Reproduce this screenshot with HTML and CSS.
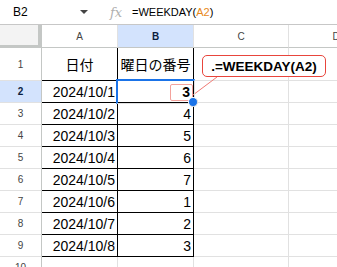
FILE: index.html
```html
<!DOCTYPE html>
<html lang="ja">
<head>
  <meta charset="UTF-8">
  <title>WEEKDAY</title>
  <link rel="stylesheet" href="styles.css">
</head>
<body>

  <div class="fbar">
    <div class="namebox">B2</div>
    <span class="caret"></span>
    <span class="fx">fx</span>
    <div class="formula">=WEEKDAY(<span class="ref">A2</span>)</div>
  </div>

  <div class="sheet">
    <div class="corner"></div>
    <div class="ch">A</div>
    <div class="ch hl">B</div>
    <div class="ch">C</div>
    <div class="ch">D</div>

    <div class="rh">1</div>
    <div class="dt title">日付</div>
    <div class="dt title">曜日の番号</div>
    <div></div>
    <div></div>

    <div class="rh hl">2</div>
    <div class="dt num">2024/10/1</div>
    <div class="dt num bold">3</div>
    <div></div>
    <div></div>

    <div class="rh">3</div>
    <div class="dt num">2024/10/2</div>
    <div class="dt num">4</div>
    <div></div>
    <div></div>

    <div class="rh">4</div>
    <div class="dt num">2024/10/3</div>
    <div class="dt num">5</div>
    <div></div>
    <div></div>

    <div class="rh">5</div>
    <div class="dt num">2024/10/4</div>
    <div class="dt num">6</div>
    <div></div>
    <div></div>

    <div class="rh">6</div>
    <div class="dt num">2024/10/5</div>
    <div class="dt num">7</div>
    <div></div>
    <div></div>

    <div class="rh">7</div>
    <div class="dt num">2024/10/6</div>
    <div class="dt num">1</div>
    <div></div>
    <div></div>

    <div class="rh">8</div>
    <div class="dt num">2024/10/7</div>
    <div class="dt num">2</div>
    <div></div>
    <div></div>

    <div class="rh">9</div>
    <div class="dt num">2024/10/8</div>
    <div class="dt num">3</div>
    <div></div>
    <div></div>

    <div class="rh">10</div>
    <div></div>
    <div></div>
    <div></div>
    <div></div>

    <!-- overlays -->
    <div class="mark"></div>
    <svg class="leader" width="30" height="25" viewBox="0 0 30 25">
      <line x1="3" y1="20" x2="27" y2="2" stroke="#f07a74" stroke-width="1"/>
    </svg>
    <div class="callout">.=WEEKDAY(A2)</div>
    <div class="selection"></div>
    <div class="handle"></div>
  </div>

</body>
</html>
```

FILE: styles.css
```css
body { margin: 0; width: 337px; height: 267px; overflow: hidden; background: #fff; font-family: "Liberation Sans", Arial, "Noto Sans CJK JP", sans-serif; color: #000; }

.fbar { display: flex; align-items: center; height: 25px; box-sizing: border-box; border-bottom: 1px solid #c7c7c7; }
.namebox { width: 80px; box-sizing: border-box; padding-left: 13px; font-size: 12px; }
.caret { width: 0; height: 0; border-left: 4px solid transparent; border-right: 4px solid transparent; border-top: 4px solid #444; }
.fx { margin-left: 22px; width: 14px; font-family: "DejaVu Serif", serif; font-style: italic; font-size: 13px; color: #b0b0b0; }
.formula { margin-left: 8px; font-size: 11px; }
.ref { color: #e8891a; }

.sheet { position: relative; display: grid; grid-template-columns: 42px 76px 76px 95px 95px; grid-template-rows: 23px 33px repeat(9, 22px); }
.sheet > div { box-sizing: border-box; border-right: 1px solid #e1e1e1; border-bottom: 1px solid #e1e1e1; }

.corner { background: #f3f3f3; border-right: 4px solid #c4c7c5 !important; border-bottom: 3px solid #c4c7c5 !important; }
.ch { display: flex; align-items: center; justify-content: center; font-size: 10px; color: #444; border-bottom-color: #c4c7c5 !important; }
.rh { display: flex; align-items: center; justify-content: center; font-size: 10px; color: #444; border-right-color: #c4c7c5 !important; }
.hl { background: #d3e3fd; font-weight: bold; color: #0b1e3f; }

.dt { border-right-color: #000 !important; border-bottom-color: #000 !important; }
.title { display: flex; align-items: center; justify-content: center; font-family: "Noto Sans CJK JP", sans-serif; font-size: 14px; }
.num { display: flex; align-items: flex-end; justify-content: flex-end; padding: 0 2px 1px 0; font-size: 14px; line-height: 17px; }
.bold { font-weight: bold; padding-right: 3px; }

.selection { position: absolute; left: 116px; top: 54px; width: 79px; height: 25px; box-sizing: border-box; border: 2px solid #1a73e8; }
.handle { position: absolute; left: 188px; top: 72px; width: 10px; height: 10px; box-sizing: border-box; border-radius: 50%; background: #1a73e8; border: 1px solid #fff; }
.mark { position: absolute; left: 170px; top: 59px; width: 23px; height: 17px; box-sizing: border-box; border: 1px solid #f4a29c !important; border-radius: 2px; }
.leader { position: absolute; left: 190px; top: 50px; }
.callout { position: absolute; left: 202px; top: 30px; width: 124px; height: 22px; box-sizing: border-box; border: 1px solid #e8453c !important; border-radius: 5px; background: #fff; display: flex; align-items: center; justify-content: center; font-weight: bold; font-size: 13.5px; }
```
